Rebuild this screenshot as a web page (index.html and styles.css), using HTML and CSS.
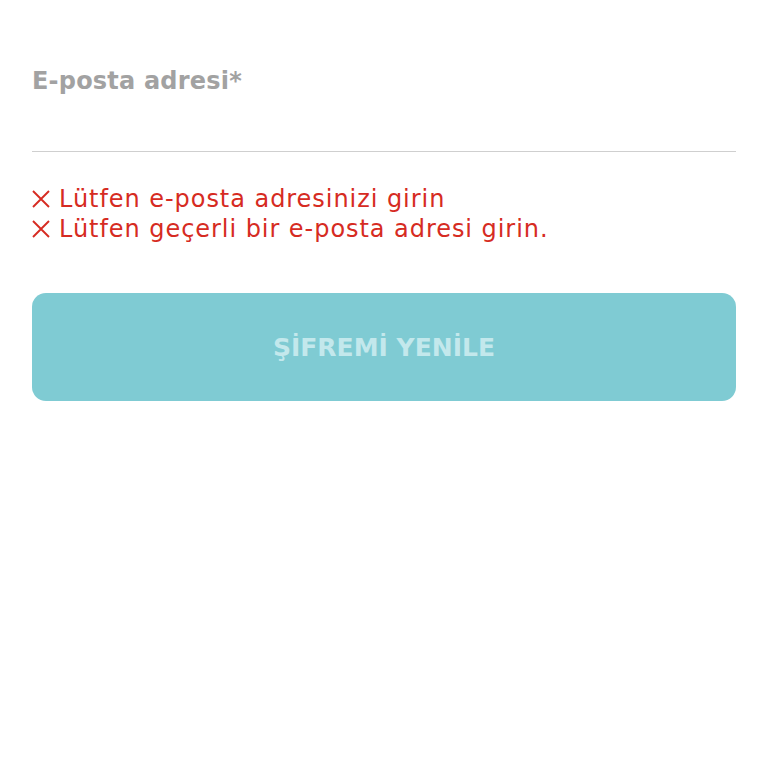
FILE: index.html
```html
<!DOCTYPE html>
<html lang="tr">
<head>
<meta charset="utf-8">
<link rel="stylesheet" href="styles.css">
</head>
<body>
<main class="form">
  <label class="label">E-posta adresi*</label>
  <div class="input"></div>
  <ul class="errors">
    <li class="error"><svg class="x" viewBox="0 0 18 18"><path d="M1 1L17 17M17 1L1 17" stroke="currentColor" stroke-width="1.9" fill="none"/></svg>Lütfen e-posta adresinizi girin</li>
    <li class="error"><svg class="x" viewBox="0 0 18 18"><path d="M1 1L17 17M17 1L1 17" stroke="currentColor" stroke-width="1.9" fill="none"/></svg>Lütfen geçerli bir e-posta adresi girin.</li>
  </ul>
  <button class="btn">ŞİFREMİ YENİLE</button>
</main>
</body>
</html>
```
FILE: styles.css
```css
html, body { margin: 0; padding: 0; background: #fff; }
body { font-family: "DejaVu Sans", "Noto Sans", sans-serif; }
.form { padding: 64px 32px 0 32px; display: flex; flex-direction: column; }
.label { font-size: 24px; font-weight: 700; color: #a2a2a2; line-height: 34px; letter-spacing: 0.2px; }
.input { height: 53px; border-bottom: 1.5px solid #cfcfcf; }
.errors { list-style: none; margin: 0; padding: 0; margin-top: 32px; }
.error { display: flex; align-items: center; color: #d62b22; font-size: 24px; line-height: 30px; letter-spacing: 0.95px; }
.x { width: 18px; height: 18px; margin-right: 9px; flex: none; }
.btn { margin-top: 49px; height: 108px; border: none; border-radius: 14px; background: #7fcbd3; color: #c3e8ec; font-family: "DejaVu Sans", "Noto Sans", sans-serif; font-size: 25px; font-weight: 700; padding: 0; }
```
